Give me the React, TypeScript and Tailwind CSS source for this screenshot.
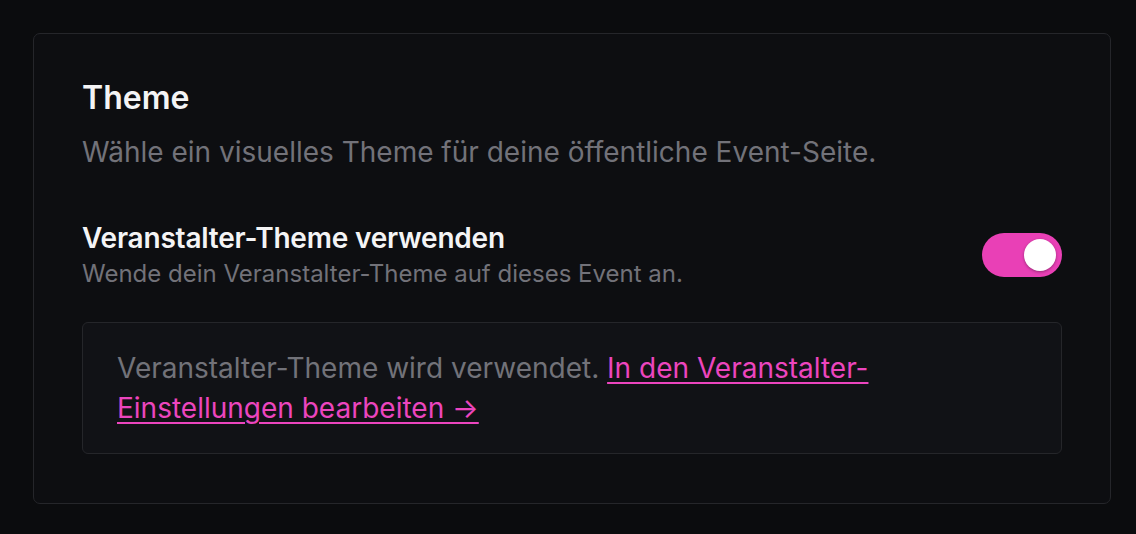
import React, { useState } from "react";

export default function App() {
  const [useOrgTheme, setUseOrgTheme] = useState(true);

  return (
    <div
      className="min-h-screen w-full bg-[#0b0c0e] pb-[32px] pl-[33px] pr-[25px] pt-[33px]"
      style={{ fontFamily: "Inter, 'Noto Sans', sans-serif" }}
    >
      <section className="rounded-[7px] border border-[#25262a] bg-[#0d0e11] p-12 pb-[49px]">
        <h2 className="text-[32px] font-semibold leading-[32px] text-[#f4f4f5]">Theme</h2>
        <p className="mt-[18px] text-[28px] leading-[40px] text-[#727279]">
          Wähle ein visuelles Theme für deine öffentliche Event-Seite.
        </p>

        <div className="mt-[48px] flex items-center justify-between">
          <div className="flex flex-col">
            <span className="text-[28px] font-semibold leading-[36px] tracking-[-0.2px] text-[#f4f4f5]">
              Veranstalter-Theme verwenden
            </span>
            <span className="mt-[2px] text-[24px] leading-[32px] text-[#727279]">
              Wende dein Veranstalter-Theme auf dieses Event an.
            </span>
          </div>
          <button
            type="button"
            role="switch"
            aria-checked={useOrgTheme}
            onClick={() => setUseOrgTheme((v) => !v)}
            className={`flex h-[44px] w-[80px] shrink-0 items-center rounded-full px-[6px] transition-colors ${
              useOrgTheme ? "justify-end bg-[#e940b6]" : "justify-start bg-[#3f3f46]"
            }`}
          >
            <span className="h-[32px] w-[32px] rounded-full bg-white shadow-[0_1px_3px_rgba(0,0,0,0.35)]" />
          </button>
        </div>

        <div className="mt-[32px] rounded-[6px] border border-[#25262a] bg-[#111216] px-[34px] pb-[25px] pt-[25px]">
          <p className="text-[28px] leading-[40px] text-[#727279]">
            Veranstalter-Theme wird verwendet.{" "}
            <a href="#" className="text-[#ec45be] underline decoration-[2px] underline-offset-[4px]">
              In den Veranstalter-Einstellungen bearbeiten →
            </a>
          </p>
        </div>
      </section>
    </div>
  );
}
